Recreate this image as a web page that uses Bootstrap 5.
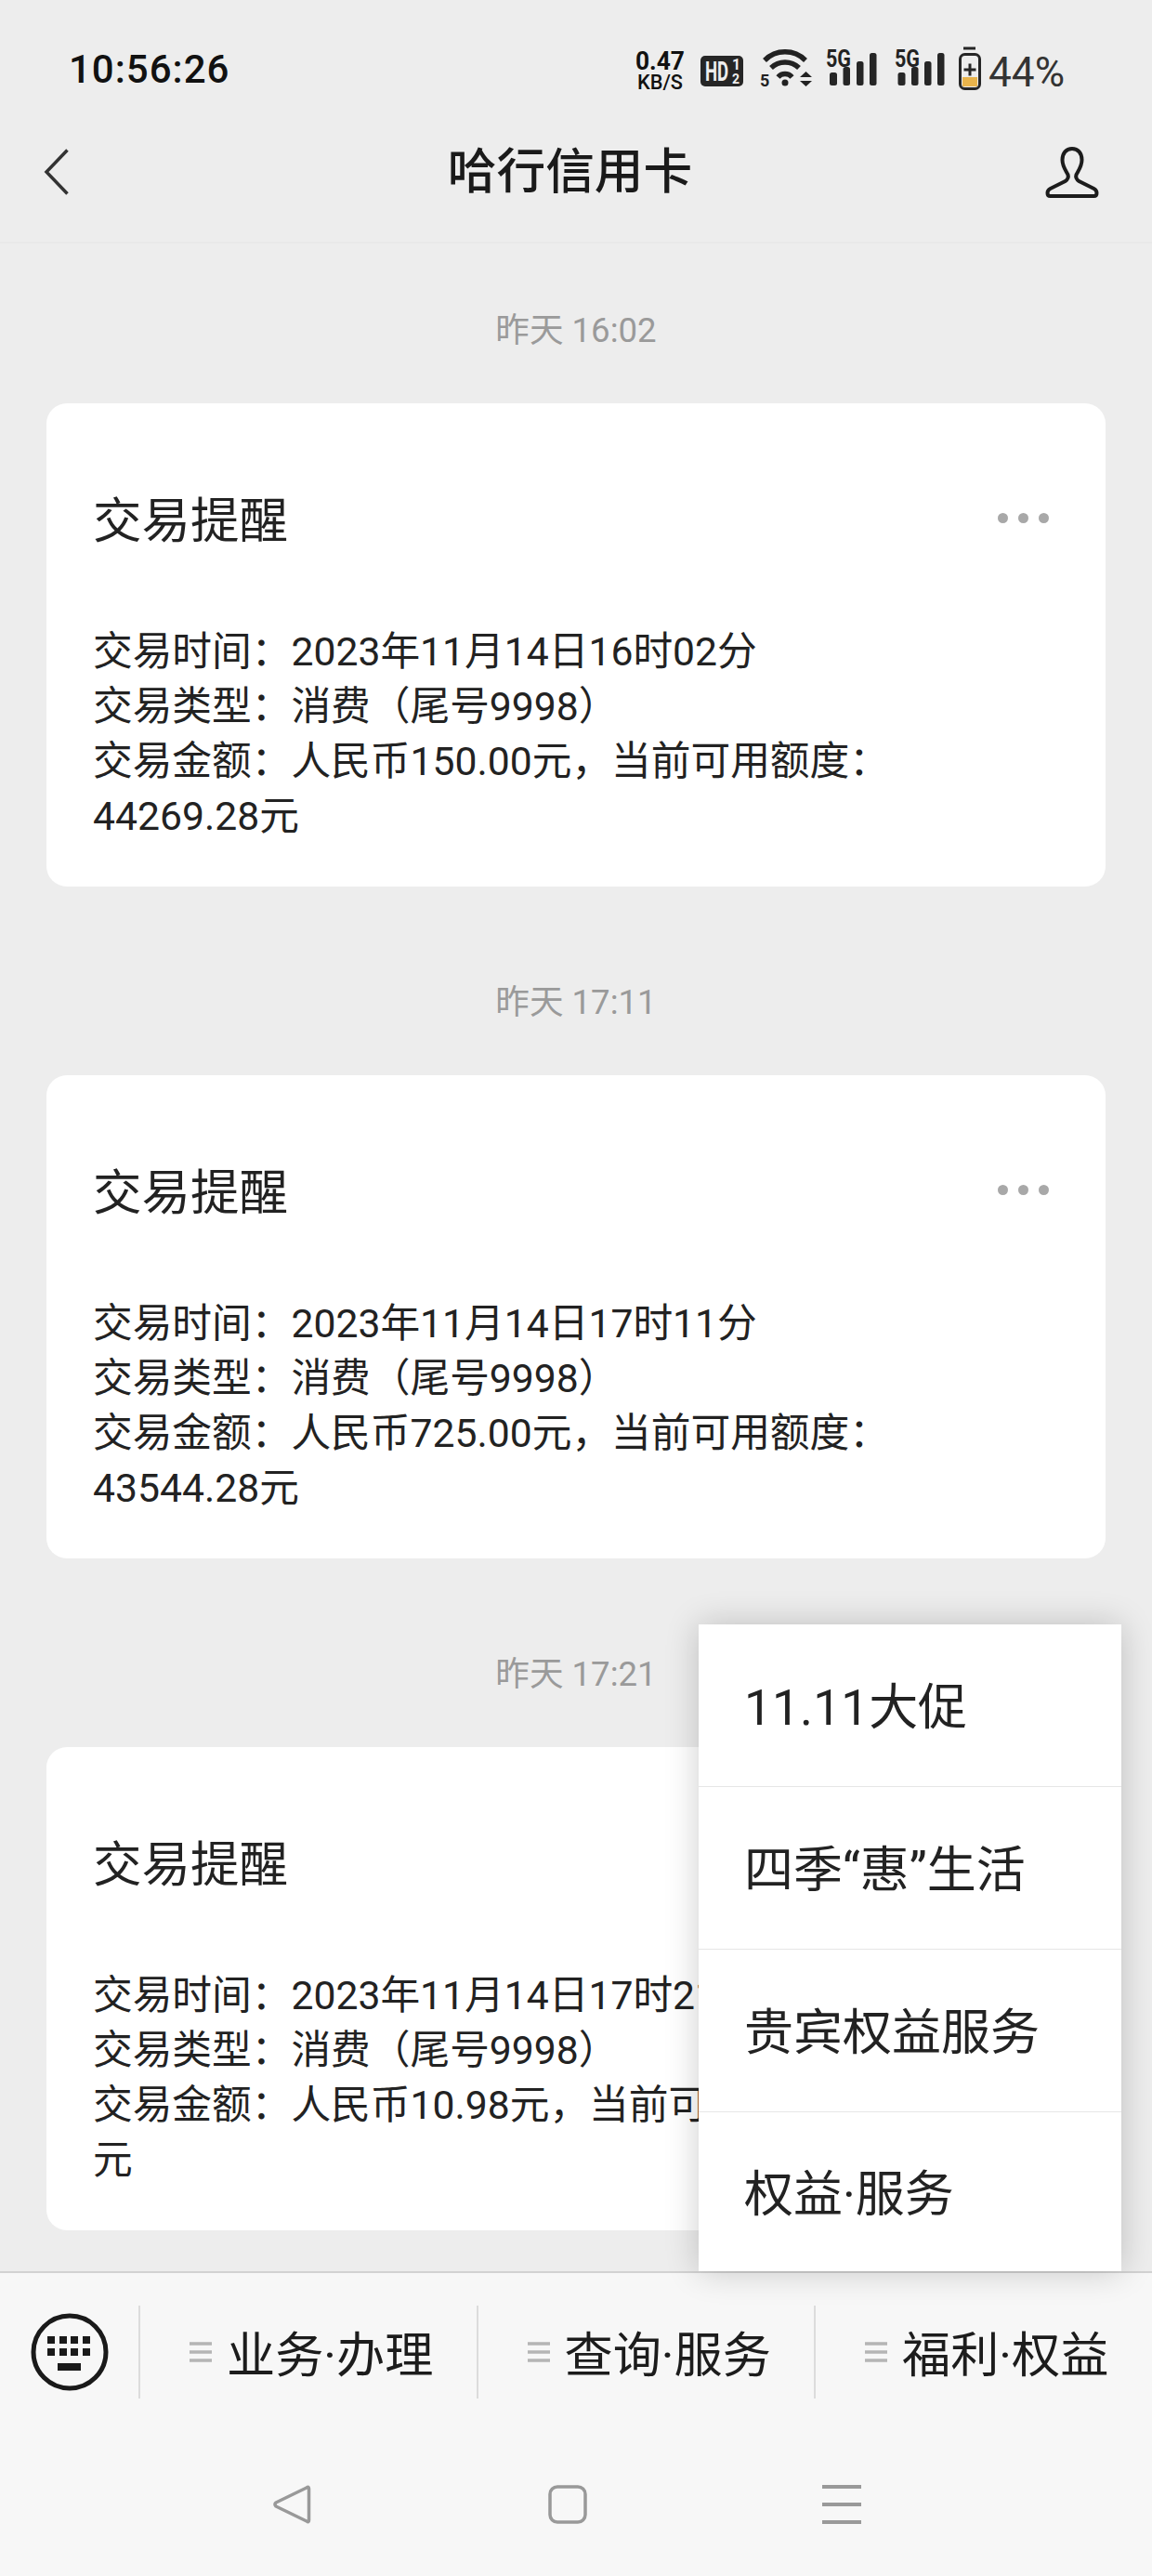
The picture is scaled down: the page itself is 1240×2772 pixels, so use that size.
<!DOCTYPE html>
<html lang="zh-CN">
<head>
<meta charset="utf-8">
<title>哈行信用卡</title>
<link rel="stylesheet" href="https://cdn.jsdelivr.net/npm/bootstrap@5.3.0/dist/css/bootstrap.min.css">
<style>
body{margin:0;background:#ededed;font-family:Roboto,"Noto Sans CJK SC",sans-serif;color:#1f1f1f}
.phone{width:1240px;height:2772px;overflow:hidden}
.statusbar{height:130px;padding:20px 80px 0 74px}
.clock{font-size:42px;font-weight:500;letter-spacing:1px;color:#111;line-height:1}
.topbar{height:132px;padding:0 57px 20px 47px;border-bottom:2px solid #e9e9e9}
.topbar-side{width:59px}
.topbar-title{font-size:52.7px;font-weight:500;line-height:1;color:#1a1a1a;padding-right:3px}
.feed{flex:1 1 auto;overflow:hidden;padding:0 50px;min-height:0}
.stamp{font-size:36.6px;color:#9a9a9a;text-align:center;line-height:44px;padding-top:72px;padding-bottom:56px}
.stamp.later{padding-top:103px}
.msg{background:#fff;border-radius:22px;height:520px;padding:0 50px;border:0}
.msg-head{padding-top:101px;height:178px}
.msg-title{font-size:52.5px;line-height:1;color:#222}
.msg-body{font-size:42.7px;line-height:59px;color:#222;padding-top:60px;white-space:nowrap}
.dots{gap:11px;padding-right:11px;margin-top:-84px;padding-top:101px}
.dots i{width:11px;height:11px;border-radius:50%;background:#a8a8a8;display:block}
.popmenu{position:absolute;left:752px;top:1748px;width:455px;height:696px;background:#fff;box-shadow:0 0 34px rgba(0,0,0,.2);z-index:3;border-radius:0}
.popmenu .list-group-item{height:175px;flex:0 0 auto;border:0;border-bottom:1px solid #e6e6e6;border-radius:0;padding:6px 0 0 49px;font-size:53px;color:#222;display:flex;align-items:center;line-height:1;margin:0;background:transparent}
.popmenu .list-group-item:last-child{border-bottom:0;height:171px;padding-top:8px}
.num-wide{letter-spacing:.2px}
.tabbar{height:328px;background:#f7f7f7;border-top:2px solid #d2d2d2;position:relative;z-index:2}
.tabrow{height:142px;padding-top:35px}
.kbd-cell{width:149px;height:100px}
.tabcell{width:363.5px;height:100px;border-left:2px solid #dcdcdc;padding-left:53px;gap:16px;font-size:52.2px;color:#1c1c1c;line-height:1}
.tabcell span{padding-top:10px}
.navrow{padding-top:86px}
.navrow svg{display:block}
.nav-back{margin-left:294px}
.nav-home{margin-left:255px}
.nav-menu{margin-left:253px}
</style>
</head>
<body>
<div class="phone d-flex flex-column position-relative">
  <div class="statusbar d-flex justify-content-between align-items-center flex-shrink-0">
    <div class="clock">10:56:26</div>
    <svg width="480" height="70" viewBox="680 40 480 70" font-family="Roboto,sans-serif">
      <text x="684" y="75" font-size="28" font-weight="700" fill="#111" textLength="53" lengthAdjust="spacingAndGlyphs">0.47</text>
      <text x="686" y="96" font-size="22" font-weight="500" fill="#111" textLength="49" lengthAdjust="spacingAndGlyphs">KB/S</text>
      <rect x="754" y="60" width="46" height="33" rx="5" fill="#262626"/>
      <text transform="translate(759 87) scale(.62 1)" font-size="30" font-weight="700" fill="#eee">HD</text>
      <text x="788" y="75" font-size="16" font-weight="700" fill="#eee">1</text>
      <text x="788" y="90" font-size="14" font-weight="700" fill="#eee">2</text>
      <text x="818" y="93" font-size="18" font-weight="700" fill="#222">5</text>
      <path d="M823 65A31 31 0 0 1 867 65M830 73A21.700 21.700 0 0 1 860 73M837.500 83A10 10 0 0 1 852.500 83" fill="none" stroke="#222" stroke-width="5.500"/>
      <circle cx="845" cy="89" r="3.500" fill="#222"/>
      <path d="M861 83l6.500-6 6.500 6zM861 87h13l-6.500 6z" fill="#222"/>
      <text x="889" y="72" font-size="25" font-weight="700" fill="#222" textLength="27" lengthAdjust="spacingAndGlyphs">5G</text>
      <g fill="#262626"><rect x="893" y="78" width="8" height="14" rx="2.500"/><rect x="907.500" y="72" width="7.500" height="20" rx="2.500"/><rect x="922" y="66" width="7.500" height="26" rx="2.500"/><rect x="936" y="57" width="7.500" height="35" rx="2.500"/></g>
      <text x="963" y="72" font-size="25" font-weight="700" fill="#222" textLength="27" lengthAdjust="spacingAndGlyphs">5G</text>
      <g fill="#262626"><rect x="966.500" y="78" width="8" height="14" rx="2.500"/><rect x="981" y="72" width="7.500" height="20" rx="2.500"/><rect x="995" y="66" width="7.500" height="26" rx="2.500"/><rect x="1009" y="57" width="7.500" height="35" rx="2.500"/></g>
      <rect x="1036" y="83" width="16" height="10" fill="#e9b44c"/>
      <rect x="1033.500" y="58.500" width="21" height="37" rx="5" fill="none" stroke="#262626" stroke-width="3"/>
      <path d="M1037 52h13M1037.500 75h13M1044 68.500v13" fill="none" stroke="#262626" stroke-width="3"/>
      <text x="1064" y="93" font-size="45" fill="#333" textLength="82" lengthAdjust="spacingAndGlyphs">44%</text>
    </svg>
  </div>
  <div class="topbar d-flex align-items-center flex-shrink-0">
    <div class="topbar-side">
      <svg class="d-block" width="27" height="50" viewBox="0 0 27 50"><path d="M25.500 1.500 3 25l22.500 23.500" fill="none" stroke="#333" stroke-width="3.500"/></svg>
    </div>
    <div class="topbar-title flex-grow-1 text-center">哈行信用卡</div>
    <div class="topbar-side">
      <svg class="d-block" width="60" height="55" viewBox="0 0 59 55"><path d="M29.500 2C36 2 40 7 40 14 40 21 36 26 34 30 33 33 34 35 37 37L53 45C57 47 57 53 53 53H6C2 53 2 47 6 45L22 37C25 35 26 33 25 30 23 26 19 21 19 14 19 7 23 2 29.500 2Z" fill="none" stroke="#1c1c1c" stroke-width="4"/></svg>
    </div>
  </div>
  <div class="feed">
    <div class="stamp">昨天 16:02</div>
    <div class="card msg">
      <div class="msg-head d-flex justify-content-between"><div class="msg-title">交易提醒</div><div class="dots d-flex"><i></i><i></i><i></i></div></div>
      <div class="msg-body">交易时间：2023年11月14日16时02分<br>交易类型：消费（尾号9998）<br>交易金额：人民币150.00元，当前可用额度：<br>44269.28元</div>
    </div>
    <div class="stamp later">昨天 17:11</div>
    <div class="card msg">
      <div class="msg-head d-flex justify-content-between"><div class="msg-title">交易提醒</div><div class="dots d-flex"><i></i><i></i><i></i></div></div>
      <div class="msg-body">交易时间：2023年11月14日17时11分<br>交易类型：消费（尾号9998）<br>交易金额：人民币725.00元，当前可用额度：<br>43544.28元</div>
    </div>
    <div class="stamp later">昨天 17:21</div>
    <div class="card msg">
      <div class="msg-head d-flex justify-content-between"><div class="msg-title">交易提醒</div></div>
      <div class="msg-body">交易时间：2023年11月14日17时21分<br>交易类型：消费（尾号9998）<br>交易金额：人民币10.98元，当前可用额度：43533.30<br>元</div>
    </div>
  </div>
  <div class="popmenu list-group">
    <a class="list-group-item"><span class="num-wide">11.11</span>大促</a>
    <a class="list-group-item">四季“惠”生活</a>
    <a class="list-group-item">贵宾权益服务</a>
    <a class="list-group-item">权益·服务</a>
  </div>
  <div class="tabbar flex-shrink-0">
    <div class="tabrow d-flex">
      <div class="kbd-cell d-flex align-items-center justify-content-center">
        <svg width="84" height="84" viewBox="0 0 84 84"><circle cx="42" cy="42" r="39" fill="none" stroke="#1a1a1a" stroke-width="5"/><g fill="#1a1a1a"><rect x="18" y="25" width="8" height="8"/><rect x="31" y="25" width="8" height="8"/><rect x="43" y="25" width="8" height="8"/><rect x="56" y="25" width="8" height="8"/><rect x="18" y="38" width="8" height="8"/><rect x="31" y="38" width="8" height="8"/><rect x="43" y="38" width="8" height="8"/><rect x="56" y="38" width="8" height="8"/><rect x="29" y="54" width="25" height="8"/></g></svg>
      </div>
      <div class="tabcell d-flex align-items-center"><svg width="24" height="24" viewBox="0 0 24 24"><path d="M0 3h24M0 12h24M0 21h24" stroke="#b5b5b5" stroke-width="3.600"/></svg><span>业务·办理</span></div>
      <div class="tabcell d-flex align-items-center"><svg width="24" height="24" viewBox="0 0 24 24"><path d="M0 3h24M0 12h24M0 21h24" stroke="#b5b5b5" stroke-width="3.600"/></svg><span>查询·服务</span></div>
      <div class="tabcell d-flex align-items-center"><svg width="24" height="24" viewBox="0 0 24 24"><path d="M0 3h24M0 12h24M0 21h24" stroke="#b5b5b5" stroke-width="3.600"/></svg><span>福利·权益</span></div>
    </div>
    <div class="navrow d-flex align-items-center">
      <svg class="nav-back" width="41" height="42" viewBox="0 0 41 42"><path d="M38.500 4v34q0 3-2.500 1L3 23q-2-2 0-4L36 3q2.500-2 2.500 1z" fill="none" stroke="#999" stroke-width="3.500" stroke-linejoin="round"/></svg>
      <svg class="nav-home" width="42" height="42" viewBox="0 0 42 42"><rect x="2" y="2" width="38" height="38" rx="8" fill="none" stroke="#999" stroke-width="3.500"/></svg>
      <svg class="nav-menu" width="42" height="42" viewBox="0 0 42 42"><path d="M0 2h42M0 21h42M0 40h42" stroke="#999" stroke-width="4"/></svg>
    </div>
  </div>
</div>
<script src="https://cdn.jsdelivr.net/npm/bootstrap@5.3.0/dist/js/bootstrap.bundle.min.js"></script>
</body>
</html>
